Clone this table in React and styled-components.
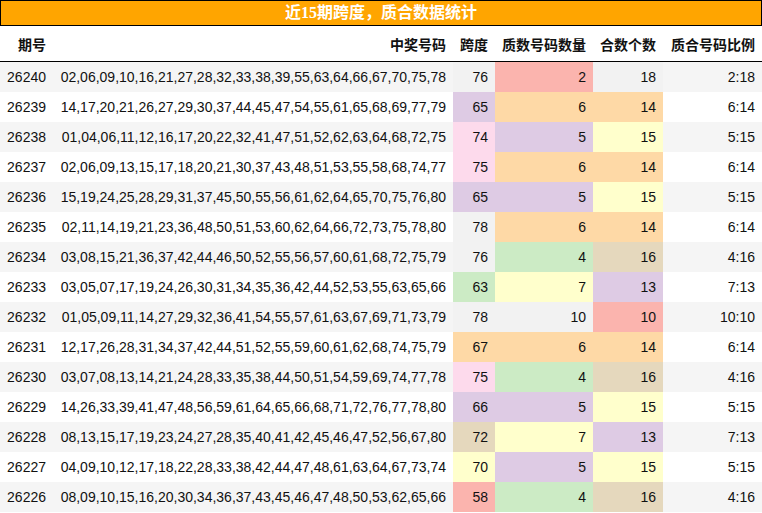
import React from 'react'
import styled, { createGlobalStyle } from 'styled-components'

const GlobalStyle = createGlobalStyle`
  html, body {
    margin: 0;
    padding: 0;
    background: #fff;
  }
  body {
    font-family: 'Liberation Sans', Arial, 'Noto Sans CJK SC', sans-serif;
    color: #111;
  }
`

// pastel palette used for the value highlights
const C = {
  red: '#fbb4ae',
  green: '#ccebc5',
  purple: '#decbe4',
  orange: '#fed9a6',
  yellow: '#ffffcc',
  tan: '#e5d8bd',
  pink: '#fddaec',
  gray: '#f2f2f2',
}

const rows = [
  ['26240', '02,06,09,10,16,21,27,28,32,33,38,39,55,63,64,66,67,70,75,78', 76, 'gray', 2, 'red', 18, 'gray'],
  ['26239', '14,17,20,21,26,27,29,30,37,44,45,47,54,55,61,65,68,69,77,79', 65, 'purple', 6, 'orange', 14, 'orange'],
  ['26238', '01,04,06,11,12,16,17,20,22,32,41,47,51,52,62,63,64,68,72,75', 74, 'pink', 5, 'purple', 15, 'yellow'],
  ['26237', '02,06,09,13,15,17,18,20,21,30,37,43,48,51,53,55,58,68,74,77', 75, 'pink', 6, 'orange', 14, 'orange'],
  ['26236', '15,19,24,25,28,29,31,37,45,50,55,56,61,62,64,65,70,75,76,80', 65, 'purple', 5, 'purple', 15, 'yellow'],
  ['26235', '02,11,14,19,21,23,36,48,50,51,53,60,62,64,66,72,73,75,78,80', 78, 'gray', 6, 'orange', 14, 'orange'],
  ['26234', '03,08,15,21,36,37,42,44,46,50,52,55,56,57,60,61,68,72,75,79', 76, 'gray', 4, 'green', 16, 'tan'],
  ['26233', '03,05,07,17,19,24,26,30,31,34,35,36,42,44,52,53,55,63,65,66', 63, 'green', 7, 'yellow', 13, 'purple'],
  ['26232', '01,05,09,11,14,27,29,32,36,41,54,55,57,61,63,67,69,71,73,79', 78, 'gray', 10, 'gray', 10, 'red'],
  ['26231', '12,17,26,28,31,34,37,42,44,51,52,55,59,60,61,62,68,74,75,79', 67, 'orange', 6, 'orange', 14, 'orange'],
  ['26230', '03,07,08,13,14,21,24,28,33,35,38,44,50,51,54,59,69,74,77,78', 75, 'pink', 4, 'green', 16, 'tan'],
  ['26229', '14,26,33,39,41,47,48,56,59,61,64,65,66,68,71,72,76,77,78,80', 66, 'purple', 5, 'purple', 15, 'yellow'],
  ['26228', '08,13,15,17,19,23,24,27,28,35,40,41,42,45,46,47,52,56,67,80', 72, 'tan', 7, 'yellow', 13, 'purple'],
  ['26227', '04,09,10,12,17,18,22,28,33,38,42,44,47,48,61,63,64,67,73,74', 70, 'yellow', 5, 'purple', 15, 'yellow'],
  ['26226', '08,09,10,15,16,20,30,34,36,37,43,45,46,47,48,50,53,62,65,66', 58, 'red', 4, 'green', 16, 'tan'],
]

const headers = ['期号', '中奖号码', '跨度', '质数号码数量', '合数个数', '质合号码比例']
const widths = [53, 400, 42, 98, 70, 99]

const Wrap = styled.div`
  width: 762px;
`

const TitleBar = styled.div`
  height: 24px;
  border: 1px solid #000;
  background: #ffa500;
  color: #fff;
  font-family: 'Liberation Serif', 'Noto Sans CJK SC', serif;
  font-weight: bold;
  font-size: 16px;
  line-height: 24px;
  text-align: center;
`

const Table = styled.table`
  width: 762px;
  border-collapse: collapse;
  table-layout: fixed;
`

const HeadCell = styled.th`
  height: 35px;
  padding: 0 7px 0 0;
  border-bottom: 1px solid #000;
  font-family: 'Noto Sans CJK SC', sans-serif;
  font-size: 14px;
  font-weight: bold;
  text-align: right;
  vertical-align: middle;
  color: #111;
`

const Row = styled.tr`
  background: ${p => (p.$odd ? '#ffffff' : '#f5f5f5')};
`

const Cell = styled.td`
  height: 30px;
  padding: 0 7px 0 0;
  font-size: 14px;
  text-align: right;
  vertical-align: middle;
  white-space: nowrap;
  overflow: hidden;
  background: ${p => (p.$tone ? C[p.$tone] : 'transparent')};
`

export default function App() {
  return (
    <Wrap>
      <GlobalStyle />
      <TitleBar>近15期跨度，质合数据统计</TitleBar>
      <Table>
        <colgroup>
          {widths.map((w, i) => (
            <col key={i} style={{ width: w }} />
          ))}
        </colgroup>
        <thead>
          <tr>
            {headers.map(h => (
              <HeadCell key={h}>{h}</HeadCell>
            ))}
          </tr>
        </thead>
        <tbody>
          {rows.map((r, i) => (
            <Row key={r[0]} $odd={i % 2 === 1}>
              <Cell>{r[0]}</Cell>
              <Cell>{r[1]}</Cell>
              <Cell $tone={r[3]}>{r[2]}</Cell>
              <Cell $tone={r[5]}>{r[4]}</Cell>
              <Cell $tone={r[7]}>{r[6]}</Cell>
              <Cell>{r[4]}:{r[6]}</Cell>
            </Row>
          ))}
        </tbody>
      </Table>
    </Wrap>
  )
}
